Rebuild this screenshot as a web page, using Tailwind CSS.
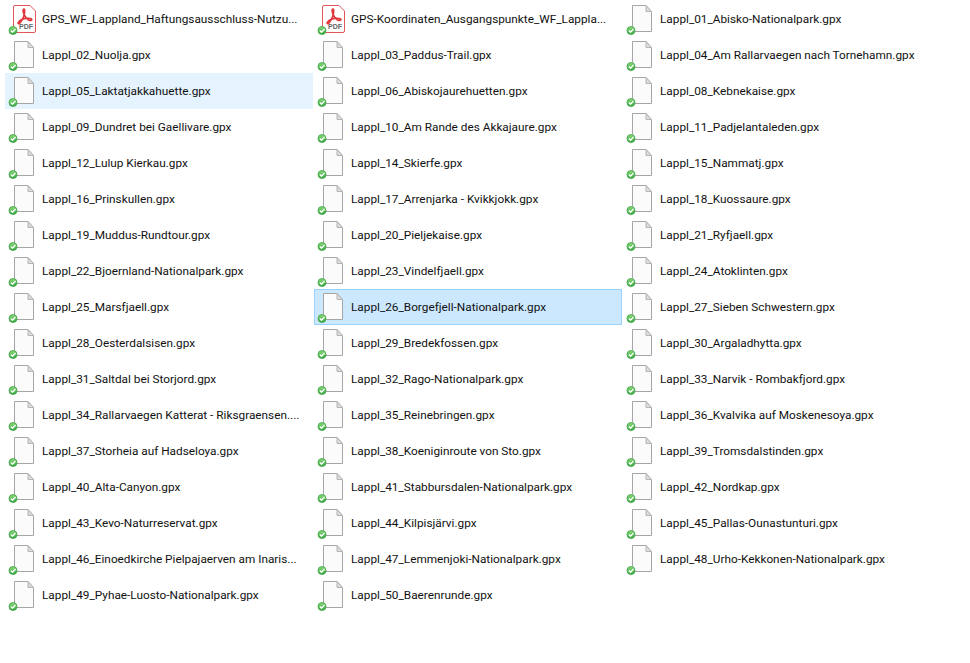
<!DOCTYPE html>
<html><head><meta charset="utf-8"><script src="https://cdn.jsdelivr.net/npm/@tailwindcss/browser@4"></script></head>
<body class="bg-white">
<svg class="absolute w-0 h-0" aria-hidden="true"><defs>
<linearGradient id="g" x1="0" y1="0" x2="0" y2="1"><stop offset="0" stop-color="#8fdc7c"/><stop offset="1" stop-color="#2fa83a"/></linearGradient>
<symbol id="chk" viewBox="0 0 37 36"><circle cx="8" cy="29.5" r="4" fill="url(#g)" stroke="#3f9f49" stroke-width=".8"/><path d="M5.8 29.5l1.700 1.800 3-3.300" fill="none" stroke="#fff" stroke-width="1.300"/></symbol>
<symbol id="doc" viewBox="0 0 37 36"><path d="M9.500 4.500H23L28.500 10.500V30.500H9.500Z" fill="#fbfbfb" stroke="#a6a6a6"/><path d="M23 4.500V10.500H28.500Z" fill="#dcdcdc" stroke="#b5b5b5"/><use href="#chk"/></symbol>
<symbol id="pdf" viewBox="0 0 37 36"><path d="M10 4.500H25L30.500 10V30a1.500 1.500 0 0 1-1.500 1.500H10A1.500 1.500 0 0 1 8.500 30V6A1.500 1.500 0 0 1 10 4.500Z" fill="#fff" stroke="#e0565a"/><path d="M19 8c-1.500 0-1 4 1.500 8l3 3c2 .8 3.500.5 3.300-.7-.3-1.500-5.800-1.300-9.300 0-3 1.100-5 3.300-4.300 4.200 1 1 3.500-2.200 5.300-6.500 1-2.500 1.700-7.500.500-8Z" fill="none" stroke="#e2353a" stroke-width="1.700"/><use href="#chk"/></symbol>
</defs></svg>
<main class="grid grid-cols-[repeat(3,309px)] pl-[5px] pt-px font-['Roboto','Noto_Sans',sans-serif] text-[11.8px] text-[#111] [&>div>span]:pt-0.5">
<div class="flex items-center h-9 w-[308px]"><div class="relative w-[37px] h-9 shrink-0"><svg class="w-[37px] h-9"><use href="#pdf"/></svg><span class="absolute left-[14px] top-[22px] font-['Liberation_Sans',sans-serif] text-[7px] leading-[7px] font-bold text-[#666]">PDF</span></div><span class="truncate">GPS_WF_Lappland_Haftungsausschluss-Nutzu...</span></div>
<div class="flex items-center h-9 w-[308px]"><div class="relative w-[37px] h-9 shrink-0"><svg class="w-[37px] h-9"><use href="#pdf"/></svg><span class="absolute left-[14px] top-[22px] font-['Liberation_Sans',sans-serif] text-[7px] leading-[7px] font-bold text-[#666]">PDF</span></div><span class="truncate">GPS-Koordinaten_Ausgangspunkte_WF_Lappla...</span></div>
<div class="flex items-center h-9 w-[308px]"><svg class="w-[37px] h-9 shrink-0"><use href="#doc"/></svg><span>Lappl_01_Abisko-Nationalpark.gpx</span></div>
<div class="flex items-center h-9 w-[308px]"><svg class="w-[37px] h-9 shrink-0"><use href="#doc"/></svg><span>Lappl_02_Nuolja.gpx</span></div>
<div class="flex items-center h-9 w-[308px]"><svg class="w-[37px] h-9 shrink-0"><use href="#doc"/></svg><span>Lappl_03_Paddus-Trail.gpx</span></div>
<div class="flex items-center h-9 w-[308px]"><svg class="w-[37px] h-9 shrink-0"><use href="#doc"/></svg><span>Lappl_04_Am Rallarvaegen nach Tornehamn.gpx</span></div>
<div class="flex items-center h-9 w-[308px] bg-[#e5f3ff]"><svg class="w-[37px] h-9 shrink-0"><use href="#doc"/></svg><span>Lappl_05_Laktatjakkahuette.gpx</span></div>
<div class="flex items-center h-9 w-[308px]"><svg class="w-[37px] h-9 shrink-0"><use href="#doc"/></svg><span>Lappl_06_Abiskojaurehuetten.gpx</span></div>
<div class="flex items-center h-9 w-[308px]"><svg class="w-[37px] h-9 shrink-0"><use href="#doc"/></svg><span>Lappl_08_Kebnekaise.gpx</span></div>
<div class="flex items-center h-9 w-[308px]"><svg class="w-[37px] h-9 shrink-0"><use href="#doc"/></svg><span>Lappl_09_Dundret bei Gaellivare.gpx</span></div>
<div class="flex items-center h-9 w-[308px]"><svg class="w-[37px] h-9 shrink-0"><use href="#doc"/></svg><span>Lappl_10_Am Rande des Akkajaure.gpx</span></div>
<div class="flex items-center h-9 w-[308px]"><svg class="w-[37px] h-9 shrink-0"><use href="#doc"/></svg><span>Lappl_11_Padjelantaleden.gpx</span></div>
<div class="flex items-center h-9 w-[308px]"><svg class="w-[37px] h-9 shrink-0"><use href="#doc"/></svg><span>Lappl_12_Lulup Kierkau.gpx</span></div>
<div class="flex items-center h-9 w-[308px]"><svg class="w-[37px] h-9 shrink-0"><use href="#doc"/></svg><span>Lappl_14_Skierfe.gpx</span></div>
<div class="flex items-center h-9 w-[308px]"><svg class="w-[37px] h-9 shrink-0"><use href="#doc"/></svg><span>Lappl_15_Nammatj.gpx</span></div>
<div class="flex items-center h-9 w-[308px]"><svg class="w-[37px] h-9 shrink-0"><use href="#doc"/></svg><span>Lappl_16_Prinskullen.gpx</span></div>
<div class="flex items-center h-9 w-[308px]"><svg class="w-[37px] h-9 shrink-0"><use href="#doc"/></svg><span>Lappl_17_Arrenjarka - Kvikkjokk.gpx</span></div>
<div class="flex items-center h-9 w-[308px]"><svg class="w-[37px] h-9 shrink-0"><use href="#doc"/></svg><span>Lappl_18_Kuossaure.gpx</span></div>
<div class="flex items-center h-9 w-[308px]"><svg class="w-[37px] h-9 shrink-0"><use href="#doc"/></svg><span>Lappl_19_Muddus-Rundtour.gpx</span></div>
<div class="flex items-center h-9 w-[308px]"><svg class="w-[37px] h-9 shrink-0"><use href="#doc"/></svg><span>Lappl_20_Pieljekaise.gpx</span></div>
<div class="flex items-center h-9 w-[308px]"><svg class="w-[37px] h-9 shrink-0"><use href="#doc"/></svg><span>Lappl_21_Ryfjaell.gpx</span></div>
<div class="flex items-center h-9 w-[308px]"><svg class="w-[37px] h-9 shrink-0"><use href="#doc"/></svg><span>Lappl_22_Bjoernland-Nationalpark.gpx</span></div>
<div class="flex items-center h-9 w-[308px]"><svg class="w-[37px] h-9 shrink-0"><use href="#doc"/></svg><span>Lappl_23_Vindelfjaell.gpx</span></div>
<div class="flex items-center h-9 w-[308px]"><svg class="w-[37px] h-9 shrink-0"><use href="#doc"/></svg><span>Lappl_24_Atoklinten.gpx</span></div>
<div class="flex items-center h-9 w-[308px]"><svg class="w-[37px] h-9 shrink-0"><use href="#doc"/></svg><span>Lappl_25_Marsfjaell.gpx</span></div>
<div class="flex items-center h-9 w-[308px] bg-[#cce8ff] outline outline-1 -outline-offset-1 outline-[#99d1ff]"><svg class="w-[37px] h-9 shrink-0"><use href="#doc"/></svg><span>Lappl_26_Borgefjell-Nationalpark.gpx</span></div>
<div class="flex items-center h-9 w-[308px]"><svg class="w-[37px] h-9 shrink-0"><use href="#doc"/></svg><span>Lappl_27_Sieben Schwestern.gpx</span></div>
<div class="flex items-center h-9 w-[308px]"><svg class="w-[37px] h-9 shrink-0"><use href="#doc"/></svg><span>Lappl_28_Oesterdalsisen.gpx</span></div>
<div class="flex items-center h-9 w-[308px]"><svg class="w-[37px] h-9 shrink-0"><use href="#doc"/></svg><span>Lappl_29_Bredekfossen.gpx</span></div>
<div class="flex items-center h-9 w-[308px]"><svg class="w-[37px] h-9 shrink-0"><use href="#doc"/></svg><span>Lappl_30_Argaladhytta.gpx</span></div>
<div class="flex items-center h-9 w-[308px]"><svg class="w-[37px] h-9 shrink-0"><use href="#doc"/></svg><span>Lappl_31_Saltdal bei Storjord.gpx</span></div>
<div class="flex items-center h-9 w-[308px]"><svg class="w-[37px] h-9 shrink-0"><use href="#doc"/></svg><span>Lappl_32_Rago-Nationalpark.gpx</span></div>
<div class="flex items-center h-9 w-[308px]"><svg class="w-[37px] h-9 shrink-0"><use href="#doc"/></svg><span>Lappl_33_Narvik - Rombakfjord.gpx</span></div>
<div class="flex items-center h-9 w-[308px]"><svg class="w-[37px] h-9 shrink-0"><use href="#doc"/></svg><span class="truncate">Lappl_34_Rallarvaegen Katterat - Riksgraensen....</span></div>
<div class="flex items-center h-9 w-[308px]"><svg class="w-[37px] h-9 shrink-0"><use href="#doc"/></svg><span>Lappl_35_Reinebringen.gpx</span></div>
<div class="flex items-center h-9 w-[308px]"><svg class="w-[37px] h-9 shrink-0"><use href="#doc"/></svg><span>Lappl_36_Kvalvika auf Moskenesoya.gpx</span></div>
<div class="flex items-center h-9 w-[308px]"><svg class="w-[37px] h-9 shrink-0"><use href="#doc"/></svg><span>Lappl_37_Storheia auf Hadseloya.gpx</span></div>
<div class="flex items-center h-9 w-[308px]"><svg class="w-[37px] h-9 shrink-0"><use href="#doc"/></svg><span>Lappl_38_Koeniginroute von Sto.gpx</span></div>
<div class="flex items-center h-9 w-[308px]"><svg class="w-[37px] h-9 shrink-0"><use href="#doc"/></svg><span>Lappl_39_Tromsdalstinden.gpx</span></div>
<div class="flex items-center h-9 w-[308px]"><svg class="w-[37px] h-9 shrink-0"><use href="#doc"/></svg><span>Lappl_40_Alta-Canyon.gpx</span></div>
<div class="flex items-center h-9 w-[308px]"><svg class="w-[37px] h-9 shrink-0"><use href="#doc"/></svg><span>Lappl_41_Stabbursdalen-Nationalpark.gpx</span></div>
<div class="flex items-center h-9 w-[308px]"><svg class="w-[37px] h-9 shrink-0"><use href="#doc"/></svg><span>Lappl_42_Nordkap.gpx</span></div>
<div class="flex items-center h-9 w-[308px]"><svg class="w-[37px] h-9 shrink-0"><use href="#doc"/></svg><span>Lappl_43_Kevo-Naturreservat.gpx</span></div>
<div class="flex items-center h-9 w-[308px]"><svg class="w-[37px] h-9 shrink-0"><use href="#doc"/></svg><span>Lappl_44_Kilpisjärvi.gpx</span></div>
<div class="flex items-center h-9 w-[308px]"><svg class="w-[37px] h-9 shrink-0"><use href="#doc"/></svg><span>Lappl_45_Pallas-Ounastunturi.gpx</span></div>
<div class="flex items-center h-9 w-[308px]"><svg class="w-[37px] h-9 shrink-0"><use href="#doc"/></svg><span class="truncate">Lappl_46_Einoedkirche Pielpajaerven am Inaris...</span></div>
<div class="flex items-center h-9 w-[308px]"><svg class="w-[37px] h-9 shrink-0"><use href="#doc"/></svg><span>Lappl_47_Lemmenjoki-Nationalpark.gpx</span></div>
<div class="flex items-center h-9 w-[308px]"><svg class="w-[37px] h-9 shrink-0"><use href="#doc"/></svg><span>Lappl_48_Urho-Kekkonen-Nationalpark.gpx</span></div>
<div class="flex items-center h-9 w-[308px]"><svg class="w-[37px] h-9 shrink-0"><use href="#doc"/></svg><span>Lappl_49_Pyhae-Luosto-Nationalpark.gpx</span></div>
<div class="flex items-center h-9 w-[308px]"><svg class="w-[37px] h-9 shrink-0"><use href="#doc"/></svg><span>Lappl_50_Baerenrunde.gpx</span></div>
</main>
</body></html>
